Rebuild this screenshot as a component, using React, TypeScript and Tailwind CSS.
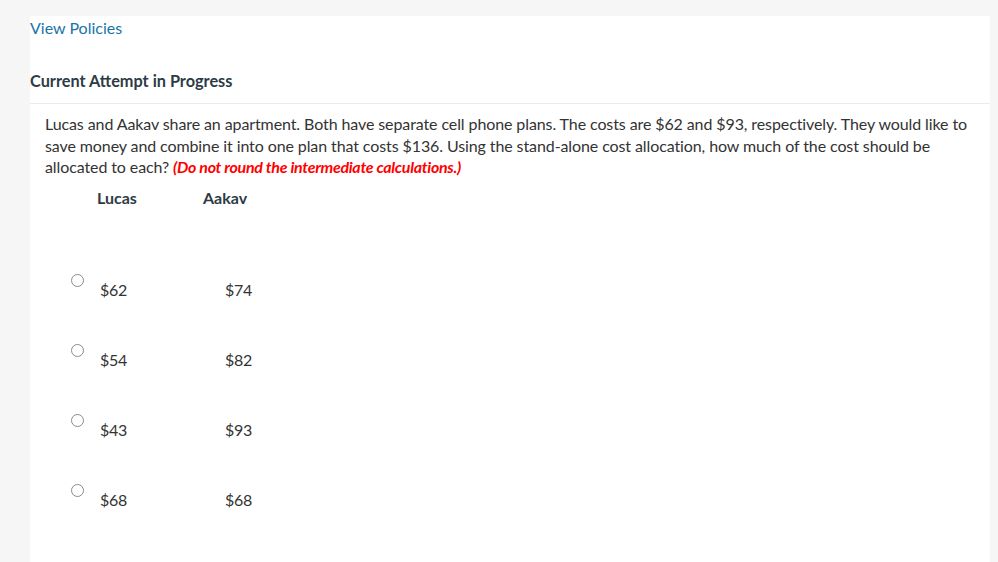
import React from "react";

const rows = [
  ["$62", "$74"],
  ["$54", "$82"],
  ["$43", "$93"],
  ["$68", "$68"],
];

export default function App() {
  return (
    <div
      className="w-[998px] h-[562px] overflow-hidden bg-[#f6f6f6] pt-[16px] pl-[30px] pr-[8px]"
      style={{ fontFamily: "Lato, 'Open Sans', sans-serif" }}
    >
      <div className="bg-white h-[600px] pt-[1px] text-[16px] text-[#333333]">
        <a className="block leading-[21px] text-[#1a73a8]">View Policies</a>
        <h2 className="mt-[32px] leading-[21px] text-[16.3px] font-bold text-[#2d3b45]">
          Current Attempt in Progress
        </h2>
        <div className="mt-[12px] border-t border-[#ebebeb] px-[15px] pt-[9px]">
          <p className="leading-[21.6px] tracking-[-0.1px]">
            Lucas and Aakav share an apartment. Both have separate cell phone plans. The costs are $62 and $93,
            respectively. They would like to save money and combine it into one plan that costs $136. Using the
            stand-alone cost allocation, how much of the cost should be allocated to each?{" "}
            <span className="font-bold italic text-[#ff0000] tracking-[-0.3px]">
              (Do not round the intermediate calculations.)
            </span>
          </p>
          <div className="mt-[9px] flex leading-[21px] font-bold text-[#2d3b45]">
            <span className="ml-[52px] w-[106px]">Lucas</span>
            <span>Aakav</span>
          </div>
          <div className="mt-[66px] tracking-[-0.3px]">
            {rows.map(([a, b], i) => (
              <div key={i} className="flex items-start h-[70px]">
                <span className="ml-[26px] w-[13px] h-[13px] rounded-full border border-[#8a8a8a] bg-white shrink-0" />
                <span className="ml-[16px] mt-[5px] w-[125px] leading-[21px]">{a}</span>
                <span className="mt-[5px] leading-[21px]">{b}</span>
              </div>
            ))}
          </div>
        </div>
      </div>
    </div>
  );
}
